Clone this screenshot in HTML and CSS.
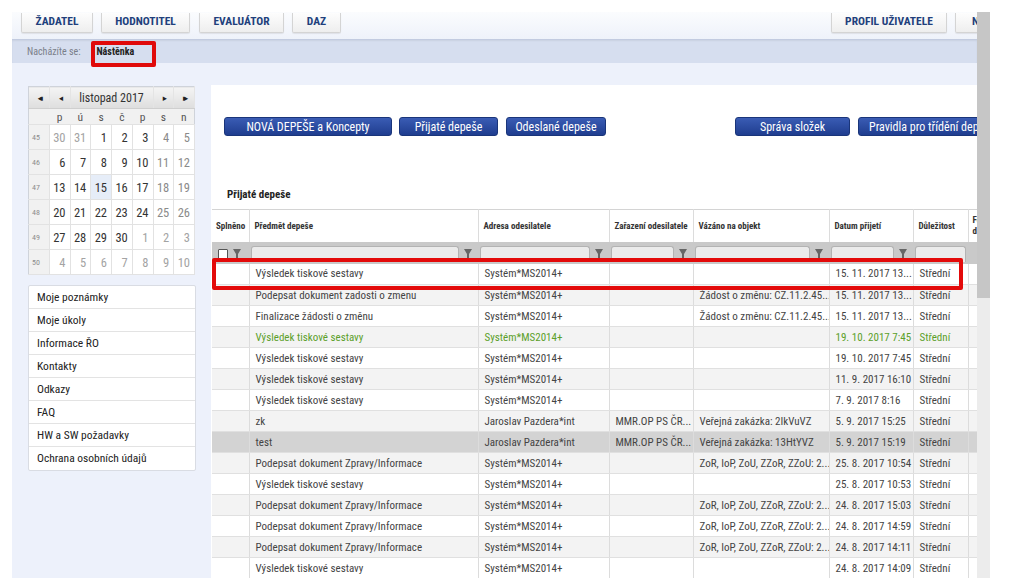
FILE: index.html
```html
<!DOCTYPE html>
<html lang="cs">
<head>
<meta charset="utf-8">
<title>Nástěnka</title>
<link rel="stylesheet" href="styles.css">
</head>
<body>
<div class="screen">
  <div class="viewport">
    <header class="topnav">
      <nav class="tabs">
        <a class="tab t-zad">ŽADATEL</a>
        <a class="tab t-hod">HODNOTITEL</a>
        <a class="tab t-eva">EVALUÁTOR</a>
        <a class="tab t-daz">DAZ</a>
      </nav>
      <nav class="tabs tabs-right">
        <a class="tab t-prof">PROFIL UŽIVATELE</a>
        <a class="tab t-nap">NÁPOVĚDA</a>
      </nav>
    </header>
    <div class="crumbs">
      <span class="crumb-label">Nacházíte se:</span>
      <span class="crumb-current">Nástěnka</span>
    </div>
    <div class="content">
      <aside class="side">
        <table class="cal">
          <thead>
            <tr class="cal-head">
              <th class="nav-btn">&#9666;&#9666;</th>
              <th class="nav-btn">&#9666;</th>
              <th class="cal-title" colspan="4">listopad 2017</th>
              <th class="nav-btn">&#9656;</th>
              <th class="nav-btn">&#9656;&#9656;</th>
            </tr>
            <tr class="cal-days">
              <th class="wk"></th><th>p</th><th>ú</th><th>s</th><th>č</th><th>p</th><th>s</th><th>n</th>
            </tr>
          </thead>
          <tbody>
            <tr><td class="wk">45</td><td class="oth">30</td><td class="oth">31</td><td>1</td><td>2</td><td>3</td><td class="we">4</td><td class="we">5</td></tr>
            <tr><td class="wk">46</td><td>6</td><td>7</td><td>8</td><td>9</td><td>10</td><td class="we">11</td><td class="we">12</td></tr>
            <tr><td class="wk">47</td><td>13</td><td>14</td><td class="today">15</td><td>16</td><td>17</td><td class="we">18</td><td class="we">19</td></tr>
            <tr><td class="wk">48</td><td>20</td><td>21</td><td>22</td><td>23</td><td>24</td><td class="we">25</td><td class="we">26</td></tr>
            <tr><td class="wk">49</td><td>27</td><td>28</td><td>29</td><td>30</td><td class="oth">1</td><td class="oth">2</td><td class="oth">3</td></tr>
            <tr><td class="wk">50</td><td class="oth">4</td><td class="oth">5</td><td class="oth">6</td><td class="oth">7</td><td class="oth">8</td><td class="oth">9</td><td class="oth">10</td></tr>
          </tbody>
        </table>
        <ul class="menu">
          <li>Moje poznámky</li>
          <li>Moje úkoly</li>
          <li>Informace ŘO</li>
          <li>Kontakty</li>
          <li>Odkazy</li>
          <li>FAQ</li>
          <li>HW a SW požadavky</li>
          <li>Ochrana osobních údajů</li>
        </ul>
      </aside>
      <main class="panel">
        <div class="buttons">
          <a class="btn b-new">NOVÁ DEPEŠE a Koncepty</a>
          <a class="btn b-in">Přijaté depeše</a>
          <a class="btn b-out">Odeslané depeše</a>
          <a class="btn b-fold">Správa složek</a>
          <a class="btn b-rules">Pravidla pro třídění depeší</a>
        </div>
        <h2 class="section-title">Přijaté depeše</h2>
        <div class="table-wrap">
          <table class="grid">
            <colgroup>
              <col class="c1"><col class="c2"><col class="c3"><col class="c4"><col class="c5"><col class="c6"><col class="c7"><col class="c8">
            </colgroup>
            <thead>
              <tr class="hdr">
                <th>Splněno</th>
                <th>Předmět depeše</th>
                <th>Adresa odesilatele</th>
                <th>Zařazení odesilatele</th>
                <th>Vázáno na objekt</th>
                <th>Datum přijetí</th>
                <th>Důležitost</th>
                <th class="wrap">Forma doručení</th>
              </tr>
              <tr class="filters">
                <th><span class="fcell"><span class="chk"></span><svg class="funnel" viewBox="0 0 8 10"><path d="M0 0H8L5 5V10H3V5Z"/></svg></span></th>
                <th><span class="fcell"><span class="finput"></span><svg class="funnel" viewBox="0 0 8 10"><path d="M0 0H8L5 5V10H3V5Z"/></svg></span></th>
                <th><span class="fcell"><span class="finput"></span><svg class="funnel" viewBox="0 0 8 10"><path d="M0 0H8L5 5V10H3V5Z"/></svg></span></th>
                <th><span class="fcell"><span class="finput"></span><svg class="funnel" viewBox="0 0 8 10"><path d="M0 0H8L5 5V10H3V5Z"/></svg></span></th>
                <th><span class="fcell"><span class="finput"></span><svg class="funnel" viewBox="0 0 8 10"><path d="M0 0H8L5 5V10H3V5Z"/></svg></span></th>
                <th><span class="fcell"><span class="finput"></span><svg class="funnel" viewBox="0 0 8 10"><path d="M0 0H8L5 5V10H3V5Z"/></svg></span></th>
                <th><span class="fcell"><span class="finput full"></span></span></th>
                <th></th>
              </tr>
            </thead>
            <tbody>
              <tr><td></td><td>Výsledek tiskové sestavy</td><td>Systém*MS2014+</td><td></td><td></td><td>15. 11. 2017 13...</td><td>Střední</td><td></td></tr>
              <tr><td></td><td>Podepsat dokument zadosti o zmenu</td><td>Systém*MS2014+</td><td></td><td>Žádost o změnu: CZ.11.2.45...</td><td>15. 11. 2017 13...</td><td>Střední</td><td></td></tr>
              <tr><td></td><td>Finalizace žádosti o změnu</td><td>Systém*MS2014+</td><td></td><td>Žádost o změnu: CZ.11.2.45...</td><td>15. 11. 2017 13...</td><td>Střední</td><td></td></tr>
              <tr class="unread"><td></td><td>Výsledek tiskové sestavy</td><td>Systém*MS2014+</td><td></td><td></td><td>19. 10. 2017 7:45</td><td>Střední</td><td></td></tr>
              <tr><td></td><td>Výsledek tiskové sestavy</td><td>Systém*MS2014+</td><td></td><td></td><td>19. 10. 2017 7:45</td><td>Střední</td><td></td></tr>
              <tr><td></td><td>Výsledek tiskové sestavy</td><td>Systém*MS2014+</td><td></td><td></td><td>11. 9. 2017 16:10</td><td>Střední</td><td></td></tr>
              <tr><td></td><td>Výsledek tiskové sestavy</td><td>Systém*MS2014+</td><td></td><td></td><td>7. 9. 2017 8:16</td><td>Střední</td><td></td></tr>
              <tr><td></td><td>zk</td><td>Jaroslav Pazdera*int</td><td>MMR.OP PS ČR...</td><td>Veřejná zakázka: 2IkVuVZ</td><td>5. 9. 2017 15:25</td><td>Střední</td><td></td></tr>
              <tr class="selected"><td></td><td>test</td><td>Jaroslav Pazdera*int</td><td>MMR.OP PS ČR...</td><td>Veřejná zakázka: 13HtYVZ</td><td>5. 9. 2017 15:19</td><td>Střední</td><td></td></tr>
              <tr><td></td><td>Podepsat dokument Zpravy/Informace</td><td>Systém*MS2014+</td><td></td><td>ZoR, IoP, ZoU, ZZoR, ZZoU: 2...</td><td>25. 8. 2017 10:54</td><td>Střední</td><td></td></tr>
              <tr><td></td><td>Výsledek tiskové sestavy</td><td>Systém*MS2014+</td><td></td><td></td><td>25. 8. 2017 10:53</td><td>Střední</td><td></td></tr>
              <tr><td></td><td>Podepsat dokument Zpravy/Informace</td><td>Systém*MS2014+</td><td></td><td>ZoR, IoP, ZoU, ZZoR, ZZoU: 2...</td><td>24. 8. 2017 15:03</td><td>Střední</td><td></td></tr>
              <tr><td></td><td>Podepsat dokument Zpravy/Informace</td><td>Systém*MS2014+</td><td></td><td>ZoR, IoP, ZoU, ZZoR, ZZoU: 2...</td><td>24. 8. 2017 14:59</td><td>Střední</td><td></td></tr>
              <tr><td></td><td>Podepsat dokument Zpravy/Informace</td><td>Systém*MS2014+</td><td></td><td>ZoR, IoP, ZoU, ZZoR, ZZoU: 2...</td><td>24. 8. 2017 14:11</td><td>Střední</td><td></td></tr>
              <tr><td></td><td>Výsledek tiskové sestavy</td><td>Systém*MS2014+</td><td></td><td></td><td>24. 8. 2017 14:09</td><td>Střední</td><td></td></tr>
            </tbody>
          </table>
          <div class="row-mark"></div>
        </div>
      </main>
    </div>
  </div>
  <div class="scrollbar"><div class="thumb"></div></div>
</div>
</body>
</html>
```
FILE: styles.css
```css
*, *::before, *::after { box-sizing: border-box; }
html, body { margin: 0; padding: 0; background: #fff; }
body {
  font-family: "Liberation Sans Narrow", "Roboto Condensed", "DejaVu Sans Condensed", Roboto, sans-serif;
  font-size: 11px;
  color: #333;
  overflow: hidden;
}
.screen {
  display: flex;
  margin: 12px 0 0 12px;
  width: 978px;
  height: 566px;
}
.viewport {
  width: 965px;
  height: 566px;
  overflow: hidden;
  background: #edf1fb;
  display: flex;
  flex-direction: column;
}
.scrollbar {
  width: 13px;
  height: 566px;
  background: #ececec;
}
.thumb {
  height: 286px;
  background: #c6c6c6;
}

/* top navigation */
.topnav {
  height: 27px;
  display: flex;
  justify-content: space-between;
  background: linear-gradient(#fbfcfe, #eef2fa);
  flex: none;
}
.tabs { display: flex; align-items: flex-start; padding-left: 9px; flex: none; }
.tabs-right { padding-left: 0; margin-right: -48px; }
.tab {
  display: flex;
  align-items: center;
  justify-content: center;
  height: 20px;
  margin-top: 1px;
  padding-bottom: 3px;
  background: linear-gradient(#fdfdfd, #eeeeee);
  border: 1px solid #d4d4d4;
  border-top: 0;
  border-radius: 0 0 2px 2px;
  box-shadow: 0 1px 1px rgba(0,0,0,0.08);
  color: #213f7c;
  font-weight: bold;
  font-size: 11.5px;
  white-space: nowrap;
}
.t-zad { width: 72px; }
.t-hod { width: 89px; margin-left: 8px; }
.t-eva { width: 85px; margin-left: 9px; }
.t-daz { width: 49px; margin-left: 8px; }
.t-prof { width: 116px; }
.t-nap { width: 70px; margin-left: 8px; justify-content: flex-start; padding-left: 16px; overflow: hidden; }

/* breadcrumb */
.crumbs {
  flex: none;
  height: 24px;
  background: #d6deef;
  border-top: 1px solid #c2cbe0;
  box-shadow: inset 0 1px 2px rgba(0,0,0,0.06);
  display: flex;
  align-items: center;
  padding-left: 15px;
  font-size: 10px;
}
.crumb-label { color: #7a7f8a; }
.crumb-current {
  position: relative;
  margin-left: 16px;
  font-weight: bold;
  color: #222;
}
.crumb-current::after {
  content: "";
  position: absolute;
  left: -6px;
  top: -5px;
  width: 65px;
  height: 26px;
  border: 4px solid #e00a0a;
  border-radius: 2px;
}

/* content */
.content {
  flex: 1;
  display: flex;
  align-items: flex-start;
  gap: 16px;
  padding: 22px 0 0 16px;
}
.side {
  width: 167px;
  flex: none;
  display: flex;
  flex-direction: column;
  gap: 10px;
  margin-top: 1px;
}

/* calendar */
.cal {
  width: 167px;
  border-collapse: collapse;
  table-layout: fixed;
  background: #fff;
  border: 1px solid #cfd3da;
}
.cal th, .cal td { padding: 0; }
.cal-head th {
  height: 22px;
  background: linear-gradient(#f4f4f4, #dedede);
  border-bottom: 1px solid #cfcfcf;
  color: #333;
  font-weight: normal;
  font-size: 12px;
}
.cal-head .nav-btn { font-size: 9px; letter-spacing: -3px; color: #222; border-right: 1px solid #e4e4e4; }
.cal-title { border-right: 1px solid #e4e4e4; }
.cal-days th {
  height: 16px;
  background: #f1f1f1;
  font-weight: normal;
  color: #555;
  font-size: 11.5px;
  text-align: center;
}
.cal td {
  height: 25px;
  text-align: right;
  padding-right: 4px;
  font-size: 12.5px;
  color: #333;
  border: 1px solid #e2e2e2;
}
.cal .wk {
  width: 14px;
  background: #f1f1f1;
  color: #8c8c8c;
  font-size: 8px;
  text-align: left;
  padding: 0 0 0 3px;
  border-left: 0;
}
.cal td.oth { color: #a3a3a3; }
.cal td.we { color: #8a8a8a; }
.cal td.today { background: #e6edf8; }

/* side menu */
.menu {
  list-style: none;
  margin: 0;
  padding: 0;
  background: #fff;
  border: 1px solid #d9dce3;
  border-radius: 2px;
  width: 168px;
}
.menu li {
  height: 23px;
  line-height: 22px;
  padding-left: 8px;
  color: #222;
  font-size: 11.5px;
  border-bottom: 1px solid #e3e3e3;
}
.menu li:last-child { border-bottom: 0; }

/* main panel */
.panel {
  flex: none;
  width: 800px;
  height: 520px;
  background: #fff;
  padding-top: 32px;
}
.buttons {
  display: flex;
  padding-left: 13px;
  gap: 8px;
}
.btn {
  height: 19px;
  display: flex;
  align-items: center;
  justify-content: center;
  background: linear-gradient(#3a5cb4, #1f3d8f);
  border: 1px solid #1a357a;
  border-radius: 3px;
  color: #fff;
  font-size: 12px;
  white-space: nowrap;
}
.b-new { width: 168px; }
.b-in { width: 99px; margin-left: -1px; }
.b-out { width: 100px; }
.b-fold { width: 115px; margin-left: 121px; }
.b-rules { width: 150px; justify-content: flex-start; padding-left: 10px; }

.section-title {
  margin: 52px 0 0 16px;
  height: 20px;
  font-size: 11px;
  font-weight: bold;
  color: #222;
}

/* data grid */
.table-wrap { position: relative; margin-top: 1px; }
.grid {
  margin-left: 1px;
  border-collapse: collapse;
  table-layout: fixed;
  width: 796px;
  font-size: 11px;
}
.c1 { width: 37px; } .c2 { width: 229px; } .c3 { width: 131px; } .c4 { width: 84px; }
.c5 { width: 136px; } .c6 { width: 84px; } .c7 { width: 55px; } .c8 { width: 40px; }
.hdr th {
  height: 32px;
  border-top: 1px solid #d4d4d4;
  border-right: 1px solid #dcdcdc;
  text-align: left;
  padding: 0 5px;
  font-size: 9px;
  font-weight: bold;
  color: #333;
  white-space: nowrap;
  overflow: hidden;
}
.hdr th:first-child { padding-left: 4px; }
.hdr th.wrap { white-space: normal; line-height: 11px; padding-left: 4px; }
.filters th {
  height: 22px;
  background: #c9c9c9;
  padding: 0 2px;
}
.fcell { display: flex; align-items: center; gap: 5px; height: 22px; padding-top: 3px; }
.finput {
  flex: 1;
  height: 16px;
  background: #ebebeb;
  border: 1px solid #b3b3b3;
  border-radius: 3px 3px 0 0;
  border-bottom: 0;
}
.chk {
  width: 10px;
  height: 10px;
  margin-left: 4px;
  background: #fff;
  border: 1px solid #555;
  border-radius: 1px;
}
.funnel { width: 8px; height: 10px; fill: #666; margin-right: 4px; }
.grid td {
  height: 21px;
  padding: 0 6px;
  border-bottom: 1px solid #e0e0e0;
  border-right: 1px solid #dcdcdc;
  color: #444;
  white-space: nowrap;
  overflow: hidden;
}
.grid tbody tr:nth-child(even) td { background: #f3f3f3; }
.grid tbody tr.selected td { background: #d3d3d3; }
.grid tbody tr.unread td { color: #5b9f2a; }
.row-mark {
  position: absolute;
  left: 1px;
  top: 49px;
  width: 751px;
  height: 32px;
  border: 4px solid #e30a0a;
  border-radius: 2px;
}
```
